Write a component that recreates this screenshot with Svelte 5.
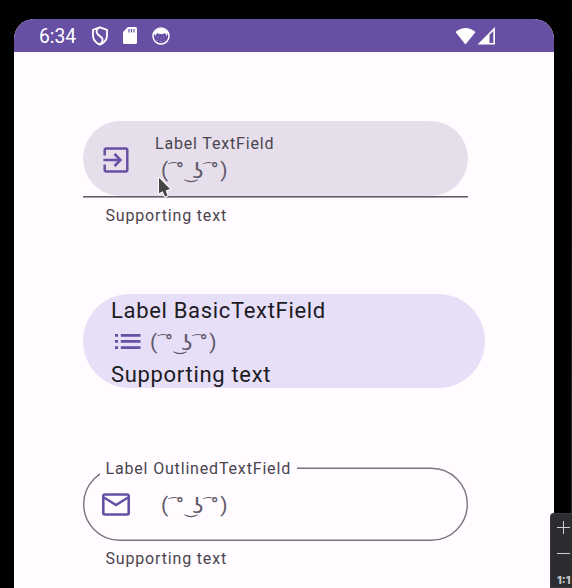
<script>
  const support = 'Supporting text';
</script>

{#snippet face()}
  <svg class="face" width="68" height="27" viewBox="0 0 68 27">
    <text><tspan x="0" y="18.8">(</tspan><tspan class="arc" x="8.800" y="15.900">&nbsp;͡</tspan><tspan x="15" y="18.8">°</tspan><tspan class="tie" x="25.2" y="20.2">&nbsp;͜</tspan><tspan class="nose" x="31.3" y="19.7">ʖ</tspan><tspan class="arc" x="43.500" y="15.900">&nbsp;͡</tspan><tspan x="49.7" y="18.8">°</tspan><tspan x="59.2" y="18.8">)</tspan></text>
  </svg>
{/snippet}

<main>
  <div class="screen">
    <header>
      <span class="time">6:34</span>
      <svg class="shield" width="18" height="20" viewBox="0 0 18 20" fill="none" stroke="#fff" stroke-width="1.8">
        <path d="M9 1.3 16 3.8v5.700c0 4.200-3 7.500-7 9.200-4-1.700-7-5-7-9.200V3.800z" />
        <path d="M8 1.800C4.800 4 5 6.500 7 8.500L10.500 11.500C12.500 13.300 11.800 16 9 18.500" />
      </svg>
      <svg class="card" width="14" height="17" viewBox="0 0 14 17">
        <path fill="#fff" d="M5 0h7.500Q14 0 14 1.500v14Q14 17 12.500 17h-11Q0 17 0 15.500V5z" />
        <path stroke="#6750a4" stroke-width="1.200" d="M6 2v3.500M8.500 2v3.500M11 2v3.500" />
      </svg>
      <svg class="cat" width="18" height="18" viewBox="0 0 18 18">
        <circle cx="9" cy="9" r="8" fill="none" stroke="#fff" stroke-width="1.500" />
        <path fill="#fff" d="M2 5.500Q9-2.500 16 5.500L14.800 9 13 6 11 7H7L5 6 3.200 9z" />
        <path fill="#fff" opacity=".3" d="M5.500 9.500h1.200v1.200H5.500zM11.300 9.500h1.200v1.200h-1.200zM8.400 11h1.200v1H8.400zM5 13h1v1H5zM8 14h2v1H8zM12 13h1v1h-1z" />
      </svg>
      <svg class="signal" width="41" height="18" viewBox="0 0 41 18">
        <path fill="#fff" d="M.5 5Q10.500-3 20.500 5L10.500 17.500z" />
        <path fill="#fff" d="M22.500 17.500 40 0v17.500z" />
        <path fill="#6750a4" d="M34.500 7.700 38.300 4v12H34.500z" />
      </svg>
    </header>

    <section class="filled">
      <div class="box">
        <svg width="26" height="26" viewBox="0 0 26 26" fill="none" stroke="#6750a4" stroke-width="2.500">
          <path d="M1.700 8.500V3Q1.700 1.500 3.200 1.500H22.800Q24.300 1.500 24.300 3V23Q24.300 24.500 22.800 24.500H3.200Q1.700 24.500 1.700 23V17.500M.4 13H17M11.500 7 17.500 13 11.500 19" />
        </svg>
        <div class="content">
          <span class="small label">Label TextField</span>
          {@render face()}
        </div>
      </div>
      <p class="small support">{support}</p>
      <svg class="cursor" width="16" height="24" viewBox="0 0 16 24">
        <path fill="#454545" stroke="#fff" stroke-width="2" stroke-linejoin="round" paint-order="stroke" d="M2 2.700V18.300L5.700 16.300 8 21.500 10.500 20.500 8.700 15.500 13 14z" />
      </svg>
    </section>

    <section class="basic">
      <span class="large">Label BasicTextField</span>
      <div class="row">
        <svg class="list" width="26" height="15" viewBox="0 0 26 15" fill="#6750a4">
          <path d="M0 0h3v2.700H0zM0 6.100h3v2.700H0zM0 12.200h3v2.700H0zM5.800 0H25.500v2.700H5.800zM5.800 6.100H25.500v2.700H5.800zM5.800 12.200H25.500v2.700H5.800z" />
        </svg>
        {@render face()}
      </div>
      <span class="large">{support}</span>
    </section>

    <section class="outlined">
      <svg class="outline" width="385" height="74" viewBox="0 0 385 74">
        <rect x=".7" y="1.200" width="383.600" height="72" rx="36" fill="none" stroke="#79747e" stroke-width="1.400" />
      </svg>
      <span class="small legend">Label OutlinedTextField</span>
      <div class="box">
        <svg width="28" height="23" viewBox="0 0 28 23" fill="none" stroke="#6750a4" stroke-width="2.600">
          <rect x="1.300" y="1.500" width="25.400" height="20" rx="1.500" />
          <path d="M2 4.500 14 12 26 4.500" />
        </svg>
        {@render face()}
      </div>
      <p class="small support">{support}</p>
    </section>
  </div>

  <aside>
    <svg width="14" height="40" viewBox="0 0 14 40" stroke="#d0d1d5" stroke-width="1"><path d="M0 13.500h13M6.500 7v13M0 39.500h13" /></svg>
    <span>1:1</span>
  </aside>
</main>

<style>
  :global(body) { margin: 0; background: #000; }
  main {
    position: relative; box-sizing: border-box; width: 572px; height: 588px;
    padding: 19px 18px 0 14px; overflow: hidden;
    background: linear-gradient(#000 10%, #2b2d30 70%) 100% 0 / 1px 100% no-repeat #000;
    font-family: Roboto, "DejaVu Sans", sans-serif; color: #49454f;
  }
  svg { display: block; flex: none; }
  p { margin: 0; }
  .screen { height: 569px; background: #fffbfe; border-radius: 20px 20px 0 0; overflow: hidden; }
  header { display: flex; align-items: center; height: 33px; background: #6750a4; padding: 0 58px 0 25px; color: #fff; }
  .time { font-size: 19.300px; line-height: 33px; width: 38px; padding-top: 2px; }
  .shield { margin-left: 14px; }
  .card { margin-left: 14px; }
  .cat { margin-left: 15px; }
  .signal { margin-left: auto; }
  section { position: relative; margin-left: 69px; }
  .small { font-size: 16px; line-height: 20px; letter-spacing: .830px; white-space: nowrap; }
  .support { padding-left: 22.500px; }
  .filled { margin-top: 69px; width: 385px; }
  .filled .box {
    display: flex; align-items: center; box-sizing: border-box; height: 77px; padding-left: 20px;
    background: linear-gradient(#625e69 50%, #a19da6 50%) 0 100% / 100% 2px no-repeat;
    position: relative; z-index: 0;
  }
  .filled .box::before { content: ""; position: absolute; z-index: -1; inset: 0 0 2px; border-radius: 38px; background: #e6dfeb; }
  .content { display: flex; flex-direction: column; margin-left: 26px; height: 53px; padding-top: 2px; }
  .content .face { margin: 4px 0 0 6px; }
  .filled .support { margin-top: 8px; }
  .cursor { position: absolute; left: 74px; top: 54px; }
  .basic { box-sizing: border-box; width: 402px; height: 93.500px; margin-top: 68px; padding-left: 28px; background: #e7def8; border-radius: 47px; }
  .large { display: block; color: #1c1b1f; font-size: 22px; line-height: 32px; letter-spacing: .680px; padding-top: 1px; }
  .row { display: flex; align-items: center; height: 31px; padding-left: 3.500px; }
  .list { margin-bottom: 3px; }
  .row .face { margin-left: 9px; padding-top: 1px; }
  .outlined { margin-top: 79.500px; width: 385px; }
  .outline { position: absolute; left: 0; top: 0; }
  .outlined .box { display: flex; align-items: center; box-sizing: border-box; height: 74px; padding-left: 19px; position: relative; }
  .legend { position: absolute; left: 16.500px; top: -8px; padding: 0 6px; background: #fffbfe; }
  .outlined .face { margin: 4px 0 0 31px; }
  .outlined .support { margin-top: 8px; }
  .face { overflow: visible; font-size: 21px; fill: #5f5969; }
  .arc { font-size: 13px; }
  .tie { font-size: 15px; }
  .nose { font-size: 22px; }
  aside {
    position: absolute; left: 550px; top: 513px; width: 22px; height: 75px; box-sizing: border-box;
    background: #2b2d30; border: 1px solid #393b3f; border-right: 0; border-radius: 4px 0 0; padding-left: 6px; color: #c5c6ca;
    font: 800 11px/20px Inter, sans-serif;
  }
  aside span { display: block; margin-top: 16px; }
</style>
